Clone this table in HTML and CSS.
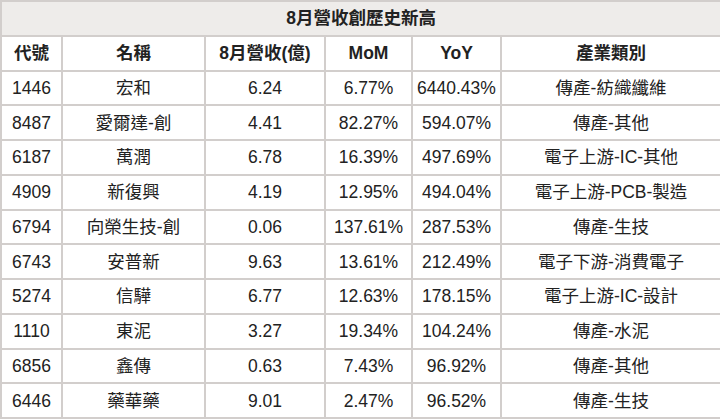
FILE: index.html
```html
<!DOCTYPE html>
<html lang="zh-Hant">
<head>
<meta charset="utf-8">
<link rel="stylesheet" href="styles.css">
</head>
<body>
<table class="rev">
<colgroup>
<col class="c1"><col class="c2"><col class="c3"><col class="c4"><col class="c5"><col class="c6">
</colgroup>
<thead>
<tr class="title"><th colspan="6">8月營收創歷史新高</th></tr>
<tr class="head"><th>代號</th><th>名稱</th><th>8月營收(億)</th><th>MoM</th><th>YoY</th><th>產業類別</th></tr>
</thead>
<tbody>
<tr><td>1446</td><td>宏和</td><td>6.24</td><td>6.77%</td><td>6440.43%</td><td>傳產-紡織纖維</td></tr>
<tr><td>8487</td><td>愛爾達-創</td><td>4.41</td><td>82.27%</td><td>594.07%</td><td>傳產-其他</td></tr>
<tr><td>6187</td><td>萬潤</td><td>6.78</td><td>16.39%</td><td>497.69%</td><td>電子上游-IC-其他</td></tr>
<tr><td>4909</td><td>新復興</td><td>4.19</td><td>12.95%</td><td>494.04%</td><td>電子上游-PCB-製造</td></tr>
<tr><td>6794</td><td>向榮生技-創</td><td>0.06</td><td>137.61%</td><td>287.53%</td><td>傳產-生技</td></tr>
<tr><td>6743</td><td>安普新</td><td>9.63</td><td>13.61%</td><td>212.49%</td><td>電子下游-消費電子</td></tr>
<tr><td>5274</td><td>信驊</td><td>6.77</td><td>12.63%</td><td>178.15%</td><td>電子上游-IC-設計</td></tr>
<tr><td>1110</td><td>東泥</td><td>3.27</td><td>19.34%</td><td>104.24%</td><td>傳產-水泥</td></tr>
<tr><td>6856</td><td>鑫傳</td><td>0.63</td><td>7.43%</td><td>96.92%</td><td>傳產-其他</td></tr>
<tr><td>6446</td><td>藥華藥</td><td>9.01</td><td>2.47%</td><td>96.52%</td><td>傳產-生技</td></tr>
</tbody>
</table>
</body>
</html>
```
FILE: styles.css
```css
html, body {
  margin: 0;
  padding: 0;
  background: #ffffff;
}
.rev {
  border-collapse: collapse;
  table-layout: fixed;
  width: 720px;
  font-family: "Liberation Sans", "Noto Sans CJK TC", sans-serif;
  font-size: 17.5px;
  color: #222222;
}
.c1 { width: 61px; }
.c2 { width: 143px; }
.c3 { width: 120px; }
.c4 { width: 87px; }
.c5 { width: 89px; }
.c6 { width: 220px; }
.rev tr {
  height: 34.75px;
}
.rev th, .rev td {
  border: 2px solid #d2cecc;
  height: 28px;
  padding: 0;
  text-align: center;
  vertical-align: middle;
  white-space: nowrap;
  line-height: 20px;
}
.rev th {
  font-weight: bold;
}
.title th {
  background: #eeecea;
}
```
